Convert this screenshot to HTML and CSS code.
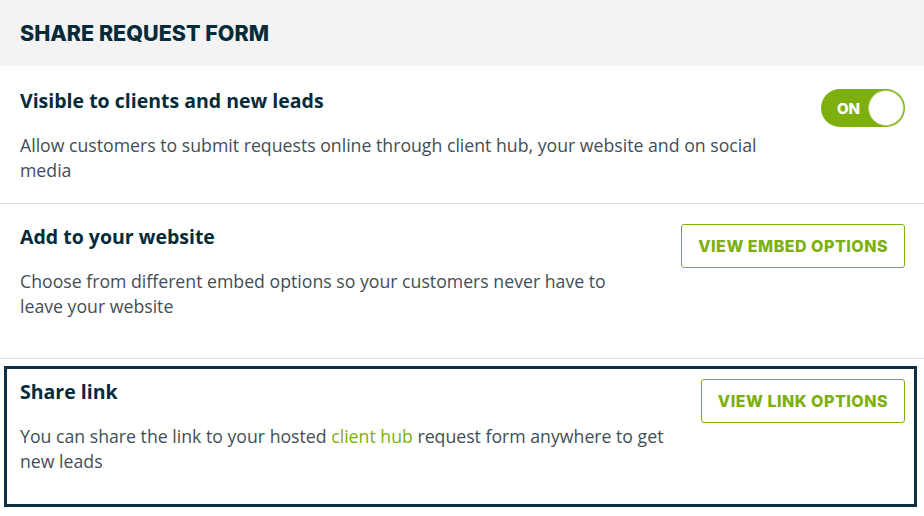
FILE: index.html
```html
<!DOCTYPE html>
<html lang="en">
<head>
  <meta charset="UTF-8" />
  <title>Share Request Form</title>
  <link rel="stylesheet" href="styles.css">
</head>
<body>

  <header class="panel-header">
    <h1>SHARE REQUEST FORM</h1>
  </header>

  <section class="setting">
    <div class="setting-text">
      <h2>Visible to clients and new leads</h2>
      <p>Allow customers to submit requests online through client hub, your website and on social media</p>
    </div>
    <div class="toggle">
      <span class="toggle-label">ON</span>
      <span class="toggle-knob"></span>
    </div>
  </section>

  <section class="setting embed">
    <div class="setting-text">
      <h2>Add to your website</h2>
      <p>Choose from different embed options so your customers never have to leave your website</p>
    </div>
    <button class="outline-btn">VIEW EMBED OPTIONS</button>
  </section>

  <section class="setting active">
    <div class="setting-text">
      <h2>Share link</h2>
      <p>You can share the link to your hosted <a href="#">client hub</a> request form anywhere to get new leads</p>
    </div>
    <button class="outline-btn">VIEW LINK OPTIONS</button>
  </section>

</body>
</html>
```

FILE: styles.css
```css
body {
  margin: 0;
  font-family: 'Open Sans', sans-serif;
  background-color: #fff;
  color: #032b3a;
}

.panel-header {
  background-color: #f3f3f3;
  height: 66px;
  padding: 0 20px;
  display: flex;
  align-items: center;
}

.panel-header h1 {
  margin: 0;
  font-family: 'Inter', sans-serif;
  font-weight: 800;
  font-size: 21.5px;
  color: #032b3a;
}

.setting {
  display: flex;
  justify-content: space-between;
  align-items: flex-start;
  padding: 20px 19px 20px 20px;
  border-bottom: 1px solid #dcdcdc;
}

.setting-text {
  max-width: 780px;
}

.setting h2 {
  margin: 0 0 17px;
  font-size: 19.5px;
  font-weight: 700;
  line-height: 30px;
  color: #032b3a;
}

.setting p {
  margin: 0;
  font-size: 17.7px;
  line-height: 25px;
  color: #424e56;
}

.setting p a {
  color: #7db00e;
  text-decoration: none;
}

.setting.embed {
  padding-top: 18px;
  padding-bottom: 39px;
}

.setting.embed .setting-text {
  max-width: 620px;
}

.setting.embed .outline-btn {
  margin-top: 2px;
}

.setting.active {
  margin: 7px 7px 10px 4px;
  padding: 8px 9px 30px 13px;
  border: 3px solid #0c3040;
}

.setting.active .setting-text {
  max-width: 670px;
}

.toggle {
  margin-top: 3px;
  width: 84px;
  height: 38px;
  box-sizing: border-box;
  border-radius: 19px;
  background-color: #7db00e;
  display: flex;
  align-items: center;
  justify-content: space-between;
  padding: 0 1px 0 16px;
}

.toggle-label {
  font-family: 'Inter', sans-serif;
  font-weight: 800;
  font-size: 15px;
  color: #fff;
}

.toggle-knob {
  width: 36px;
  height: 36px;
  box-sizing: border-box;
  border: 1px solid #a9cc5c;
  border-radius: 50%;
  background-color: #fff;
}

.outline-btn {
  margin-top: 2px;
  height: 44px;
  padding: 0 16px;
  background-color: #fff;
  border: 1px solid #7db00e;
  border-radius: 3px;
  font-family: 'Inter', sans-serif;
  font-weight: 800;
  font-size: 16px;
  letter-spacing: 0.5px;
  color: #7db00e;
  cursor: pointer;
}
```
